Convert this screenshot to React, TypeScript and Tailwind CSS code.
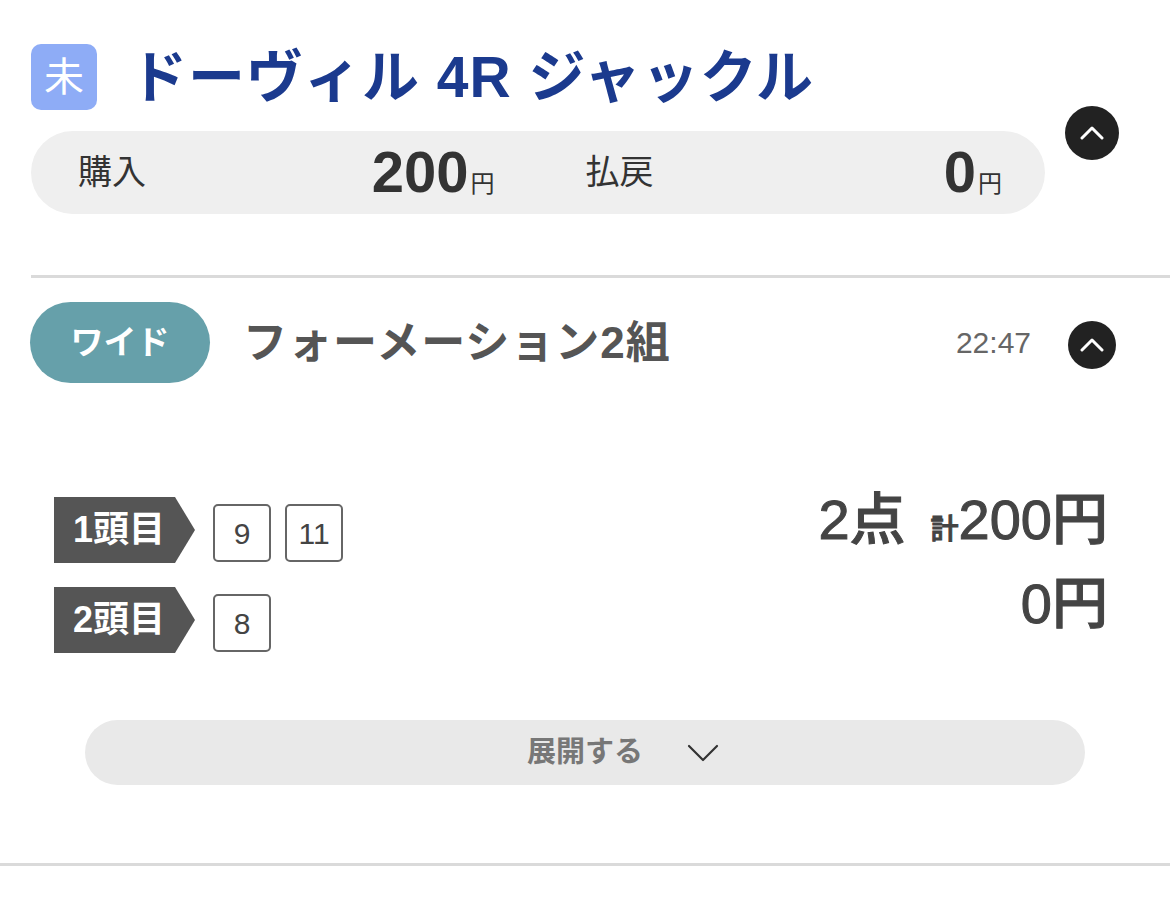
import { useState } from 'react';

const font = "font-['Liberation_Sans','Noto_Sans_CJK_JP',sans-serif]";

function Chevron({ up = true, size = 54 }: { up?: boolean; size?: number }) {
  return (
    <div
      className="rounded-full bg-[#222222] flex items-center justify-center shrink-0"
      style={{ width: size, height: size }}
    >
      <svg width="24" height="14" viewBox="0 0 24 14" fill="none">
        <polyline
          points={up ? '2,12 12,2 22,12' : '2,2 12,12 22,2'}
          stroke="white"
          strokeWidth="3"
          strokeLinecap="round"
          strokeLinejoin="round"
        />
      </svg>
    </div>
  );
}

function Umaban({ n }: { n: number }) {
  return (
    <div className="w-[58px] h-[58px] rounded-[5px] border-2 border-[#666666] flex items-center justify-center text-[30px] text-[#444444] mb-[1px]">
      {n}
    </div>
  );
}

function Kashira({ label }: { label: string }) {
  return (
    <div className="w-[141px] h-[66px] bg-[#555555] [clip-path:polygon(0_0,121px_0,141px_50%,121px_100%,0_100%)] flex items-center pl-[19px] text-white font-bold text-[36px] leading-none">
      {label}
    </div>
  );
}

export default function App() {
  const [open, setOpen] = useState(false);

  const rows = [
    { label: '1頭目', nums: [9, 11] },
    { label: '2頭目', nums: [8] },
  ];

  return (
    <div className={`w-[1170px] h-[910px] bg-white overflow-hidden ${font}`}>
      {/* レース概要 */}
      <div className="pt-[44px] pl-[31px] flex">
        <div className="w-[1014px]">
          <div className="flex items-center gap-[33px] h-[66px]">
            <div className="w-[66px] h-[66px] rounded-[10px] bg-[#8eacf6] flex items-center justify-center text-white text-[40px] leading-none">
              未
            </div>
            <h1 className="text-[57px] font-bold text-[#1b3a8e] leading-none tracking-[1px]">
              ドーヴィル 4R ジャックル
            </h1>
          </div>

          <div className="mt-[21px] h-[83px] rounded-full bg-[#efefef] flex">
            <div className="flex-1 flex items-center justify-between pl-[47px] pr-[44px]">
              <span className="text-[34px] text-[#333333]">購入</span>
              <span className="flex items-baseline text-[#333333]">
                <span className="text-[58px] font-bold leading-none">200</span>
                <span className="text-[24px] ml-[2px]">円</span>
              </span>
            </div>
            <div className="flex-1 flex items-center justify-between pl-[47px] pr-[43px]">
              <span className="text-[34px] text-[#333333]">払戻</span>
              <span className="flex items-baseline text-[#333333]">
                <span className="text-[58px] font-bold leading-none">0</span>
                <span className="text-[24px] ml-[2px]">円</span>
              </span>
            </div>
          </div>
        </div>
        <div className="ml-[20px] mt-[62px]">
          <Chevron size={54} />
        </div>
      </div>

      <div className="mt-[61px] ml-[31px] h-[3px] bg-[#dadada]" />

      {/* 買い目 */}
      <div className="mt-[24px] pl-[30px] pr-[54px] flex items-center h-[81px]">
        <div className="w-[180px] h-[81px] rounded-full bg-[#66a0aa] flex items-center justify-center text-white font-bold text-[33px]">
          ワイド
        </div>
        <div className="ml-[33px] text-[44px] tracking-[1px] font-bold text-[#555555]">フォーメーション2組</div>
        <div className="ml-auto text-[30px] text-[#666666]">22:47</div>
        <div className="ml-[37px] mt-[4px]">
          <Chevron size={48} />
        </div>
      </div>

      <div className="mt-[114px] pl-[54px] pr-[62px] flex justify-between">
        <div className="flex flex-col gap-[24px]">
          {rows.map((r) => (
            <div key={r.label} className="flex items-end">
              <Kashira label={r.label} />
              <div className="ml-[18px] flex gap-[14px]">
                {r.nums.map((n) => (
                  <Umaban key={n} n={n} />
                ))}
              </div>
            </div>
          ))}
        </div>
        <div className="flex flex-col items-end text-[#444444] -mt-[5px] [-webkit-text-stroke:1px_#444444]">
          <div className="flex items-baseline leading-none">
            <span className="text-[56px] font-medium">2点</span>
            <span className="ml-[25px] text-[28px] font-medium">計</span>
            <span className="text-[56px] font-medium">200円</span>
          </div>
          <div className="mt-[28px] text-[56px] leading-none font-medium">0円</div>
        </div>
      </div>

      <button
        onClick={() => setOpen(!open)}
        className="mt-[67px] ml-[85px] w-[1000px] h-[65px] rounded-full bg-[#e9e9e9] flex items-center justify-center"
      >
        <span className="relative text-[29px] font-bold text-[#777777]">
          {open ? '閉じる' : '展開する'}
          <svg
            className="absolute left-full top-1/2 -translate-y-1/2 ml-[44px]"
            width="32"
            height="20"
            viewBox="0 0 32 20"
            fill="none"
          >
            <polyline
              points={open ? '2,17 16,3 30,17' : '2,3 16,17 30,3'}
              stroke="#333333"
              strokeWidth="2.2"
              strokeLinecap="round"
              strokeLinejoin="round"
            />
          </svg>
        </span>
      </button>

      <div className="mt-[78px] h-[3px] bg-[#dadada]" />
    </div>
  );
}
